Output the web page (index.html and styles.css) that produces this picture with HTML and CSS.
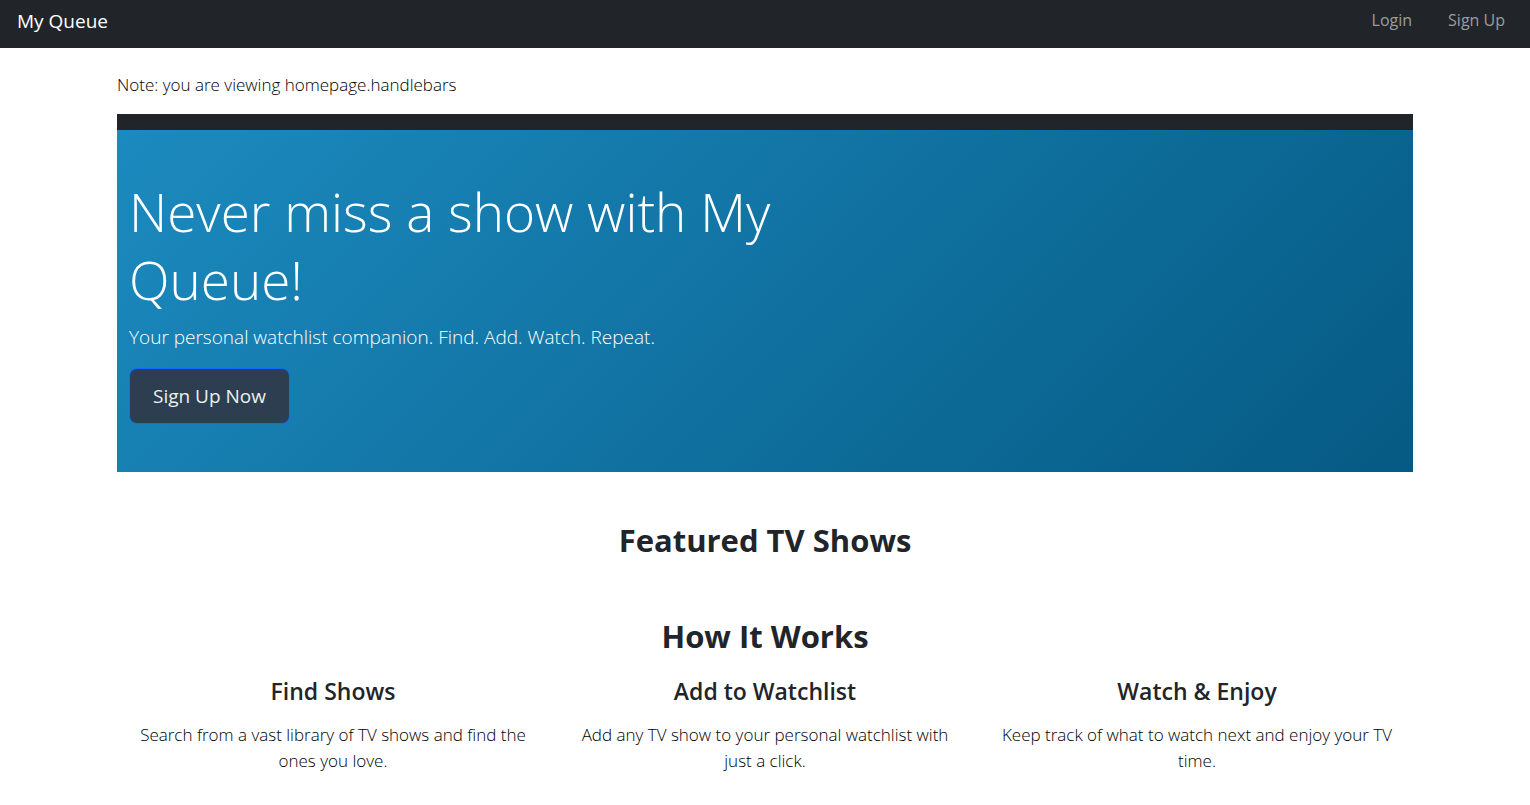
FILE: index.html
```html
<!DOCTYPE html>
<html lang="en">
<head>
<meta charset="utf-8">
<meta name="viewport" content="width=device-width, initial-scale=1">
<title>My Queue</title>
<link rel="stylesheet" href="styles.css">
</head>
<body>
<header class="navbar">
  <a class="brand" href="#">My Queue</a>
  <nav class="nav-links">
    <a href="#">Login</a>
    <a href="#">Sign Up</a>
  </nav>
</header>
<main class="container">
  <p class="note">Note: you are viewing homepage.handlebars</p>
  <section class="hero">
    <div class="hero-inner">
      <div class="hero-copy">
        <h1>Never miss a show with My Queue!</h1>
        <p class="lead">Your personal watchlist companion. Find. Add. Watch. Repeat.</p>
        <button class="signup" type="button">Sign Up Now</button>
      </div>
    </div>
  </section>
  <section class="featured">
    <h2>Featured TV Shows</h2>
  </section>
  <section class="how">
    <h2>How It Works</h2>
    <div class="steps">
      <article class="step">
        <h3>Find Shows</h3>
        <p>Search from a vast library of TV shows and find the ones you love.</p>
      </article>
      <article class="step">
        <h3>Add to Watchlist</h3>
        <p>Add any TV show to your personal watchlist with just a click.</p>
      </article>
      <article class="step">
        <h3>Watch &amp; Enjoy</h3>
        <p>Keep track of what to watch next and enjoy your TV time.</p>
      </article>
    </div>
  </section>
</main>
</body>
</html>
```
FILE: styles.css
```css
* {
  box-sizing: border-box;
}

body {
  margin: 0;
  background: #fff;
  color: #212529;
  font-family: "Segoe UI", "Open Sans", "Noto Sans", sans-serif;
  font-size: 17px;
  font-weight: 300;
  line-height: 26px;
}

h1, h2, h3, p {
  margin: 0;
}

.navbar {
  display: flex;
  justify-content: space-between;
  align-items: flex-start;
  min-height: 48px;
  padding: 8px 25px 8px 17px;
  background: #212529;
  font-weight: 400;
}

.navbar a {
  text-decoration: none;
}

.brand {
  color: #fff;
  font-size: 19px;
}

.nav-links {
  display: flex;
  gap: 36px;
}

.nav-links a {
  color: #9b9d9e;
  font-size: 16px;
  line-height: 24px;
}

.container {
  max-width: 1320px;
  margin: 0 auto;
  padding: 24px 12px;
}

.note {
  margin-bottom: 16px;
  color: #000;
}

.hero {
  padding-top: 16px;
  background: #212529;
}

.hero-inner {
  padding: 48px 12px;
  background: linear-gradient(135deg, #1c8abf, #055a83);
  color: #fff;
}

.hero-copy {
  max-width: 660px;
}

.hero h1 {
  margin-bottom: 8px;
  font-size: 53px;
  font-weight: 300;
  line-height: 68px;
}

.lead {
  margin-bottom: 16px;
  font-size: 19px;
  line-height: 30px;
}

.signup {
  padding: 12px 23px;
  border: 1px solid #0d6efd;
  border-radius: 8px;
  background: #2c3e50;
  color: #ecf0f1;
  font: inherit;
  font-size: 19px;
  font-weight: 400;
  line-height: 30px;
}

.featured {
  padding: 48px 0 24px;
  text-align: center;
}

.how {
  padding: 32px 0 0;
  text-align: center;
}

h2 {
  font-size: 31px;
  font-weight: 700;
  line-height: 40px;
}

.how h2 {
  margin-bottom: 20px;
}

.steps {
  display: grid;
  grid-template-columns: repeat(3, 1fr);
}

.step {
  padding: 0 18px;
}

.step h3 {
  margin-bottom: 16px;
  font-size: 23px;
  font-weight: 600;
  line-height: 30px;
}

.step p {
  color: #000;
}
```
